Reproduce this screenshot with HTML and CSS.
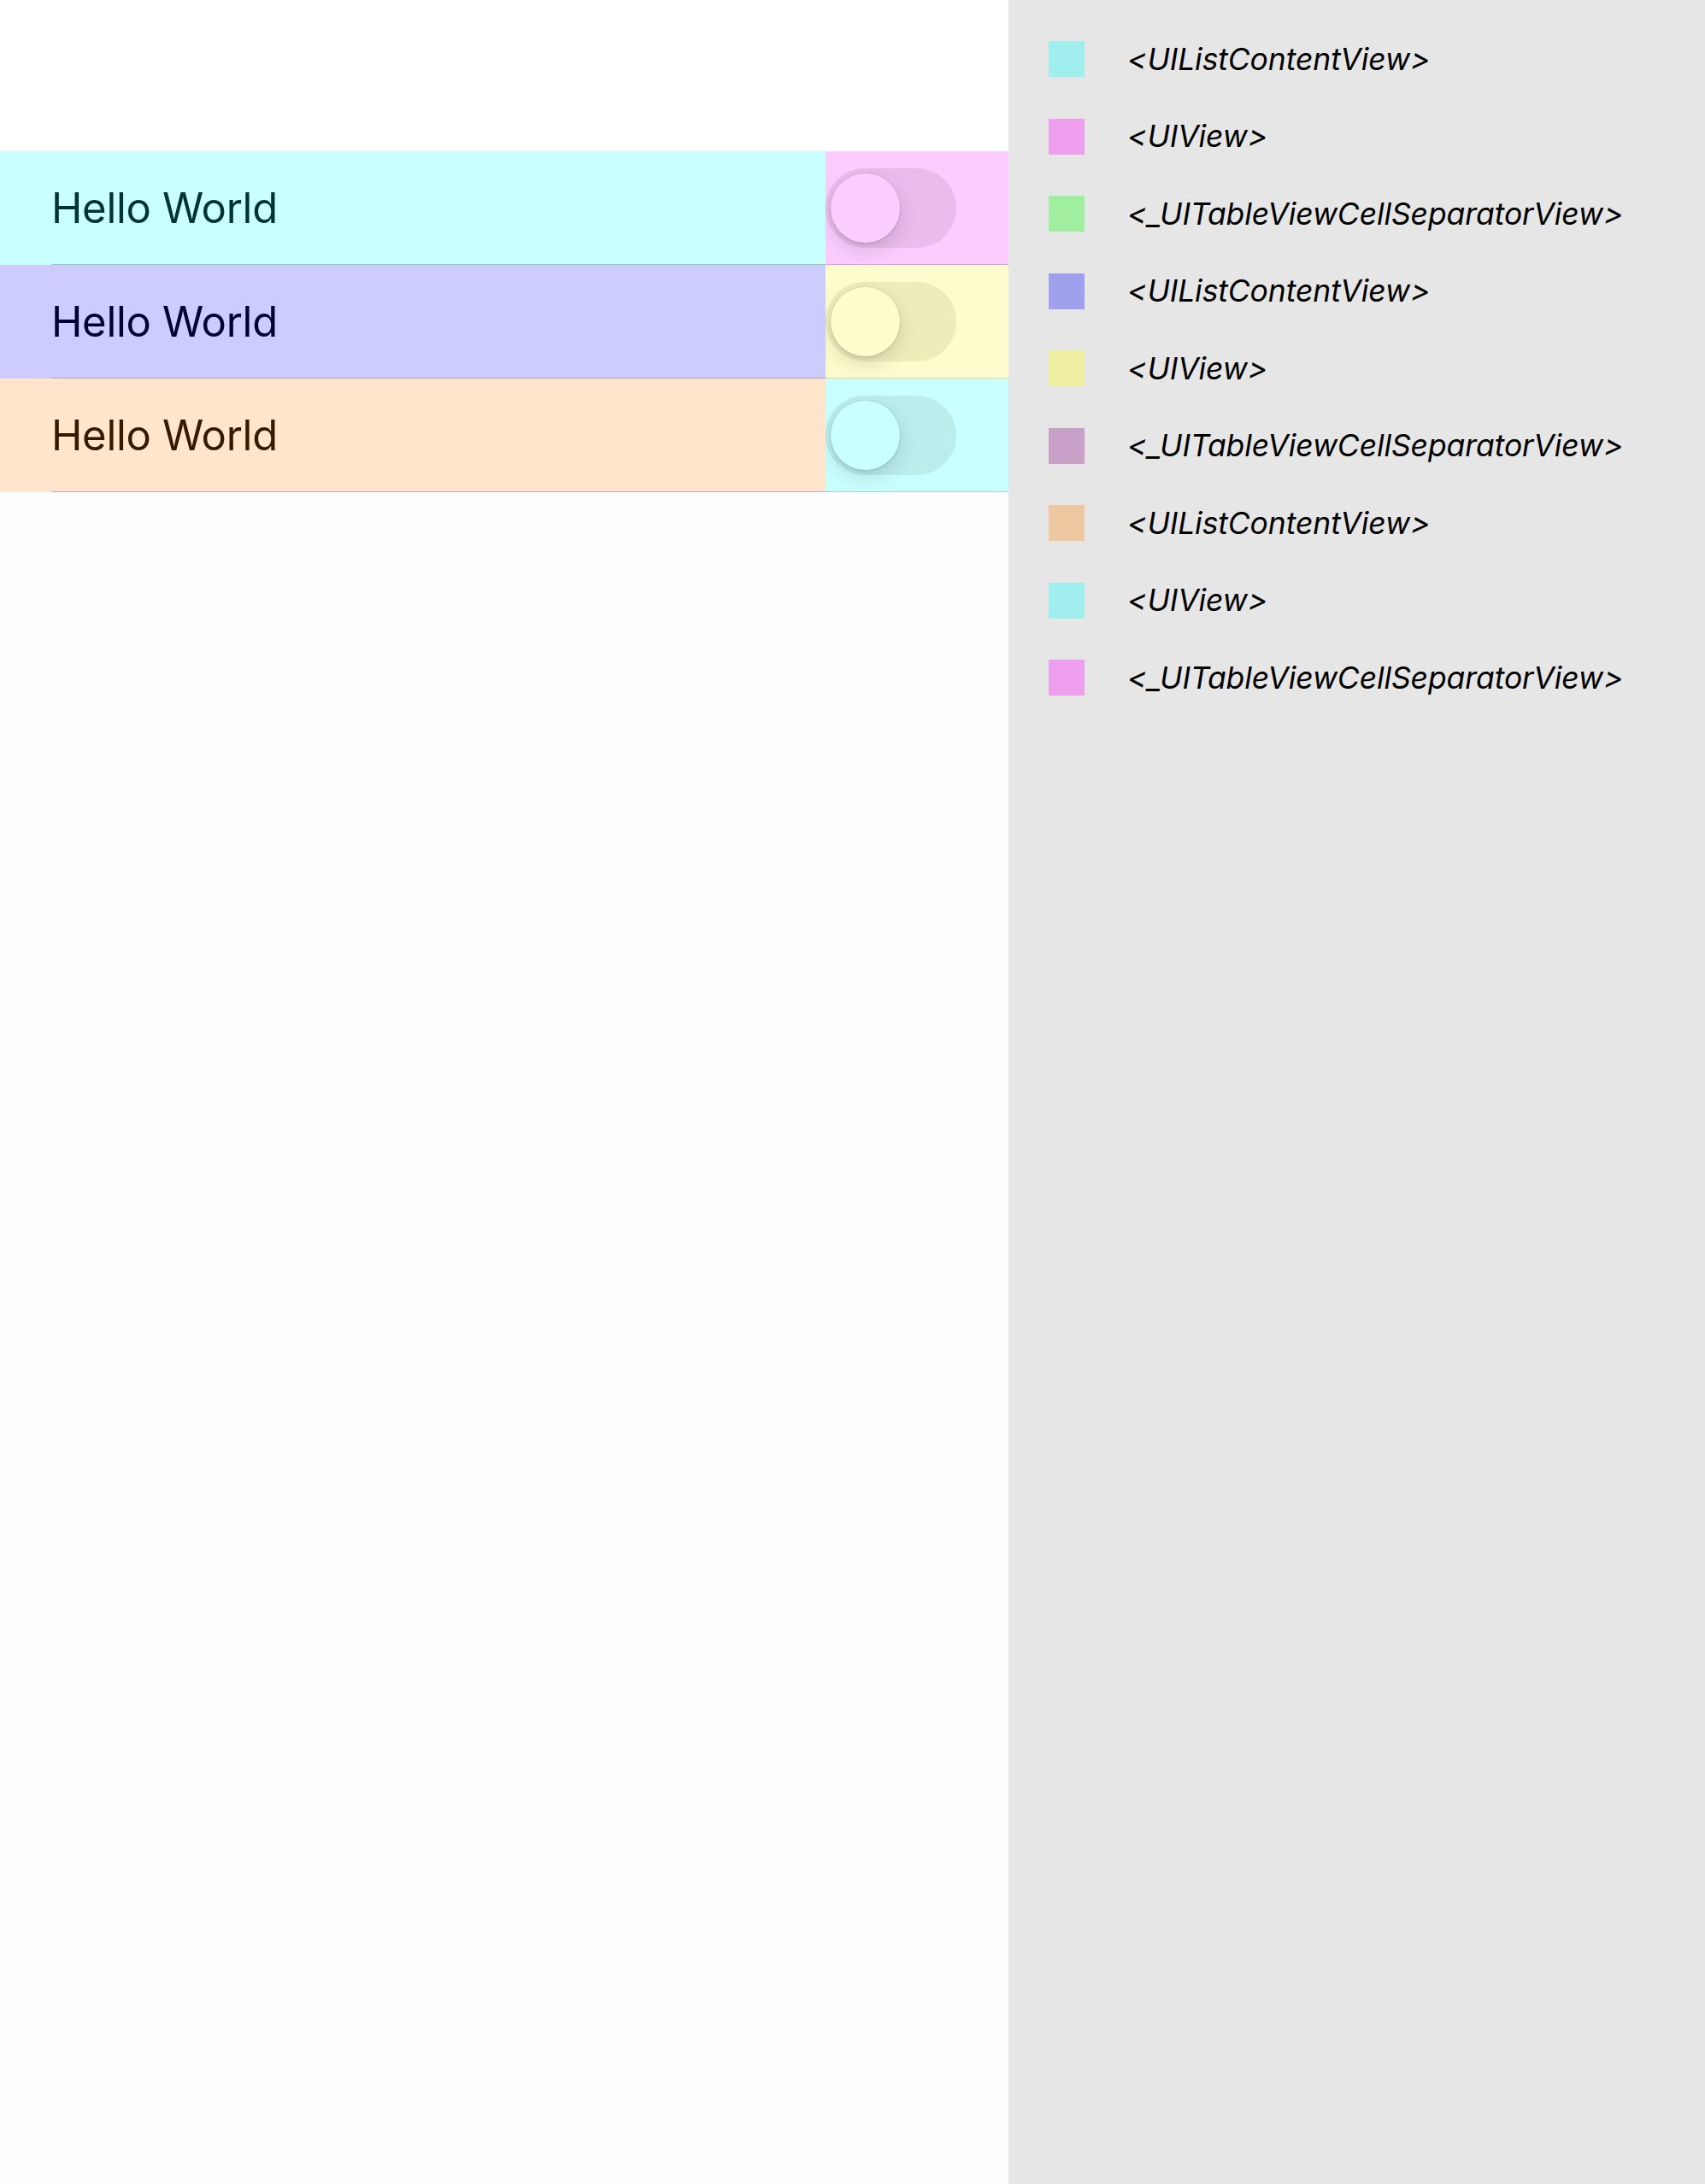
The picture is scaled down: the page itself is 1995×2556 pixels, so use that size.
FILE: index.html
```html
<!DOCTYPE html>
<html>
<head>
<meta charset="utf-8">
<link rel="stylesheet" href="styles.css">
</head>
<body>
<div class="canvas">
  <div class="nav"></div>
  <div class="list">
    <div class="row">
      <div class="content c1"><span class="label t1">Hello World</span></div>
      <div class="accessory a1"><div class="track k1"><div class="knob"></div></div></div>
    </div>
    <div class="row">
      <div class="content c2"><span class="label t2">Hello World</span></div>
      <div class="accessory a2"><div class="track k2"><div class="knob"></div></div></div>
    </div>
    <div class="row">
      <div class="content c3"><span class="label t3">Hello World</span></div>
      <div class="accessory a3"><div class="track k3"><div class="knob"></div></div></div>
    </div>
  </div>
</div>
<div class="legend">
  <div class="item"><span class="sw s-cyan"></span><span class="name">&lt;UIListContentView&gt;</span></div>
  <div class="item"><span class="sw s-pink"></span><span class="name">&lt;UIView&gt;</span></div>
  <div class="item"><span class="sw s-green"></span><span class="name">&lt;_UITableViewCellSeparatorView&gt;</span></div>
  <div class="item"><span class="sw s-blue"></span><span class="name">&lt;UIListContentView&gt;</span></div>
  <div class="item"><span class="sw s-yellow"></span><span class="name">&lt;UIView&gt;</span></div>
  <div class="item"><span class="sw s-mauve"></span><span class="name">&lt;_UITableViewCellSeparatorView&gt;</span></div>
  <div class="item"><span class="sw s-peach"></span><span class="name">&lt;UIListContentView&gt;</span></div>
  <div class="item"><span class="sw s-cyan"></span><span class="name">&lt;UIView&gt;</span></div>
  <div class="item"><span class="sw s-pink"></span><span class="name">&lt;_UITableViewCellSeparatorView&gt;</span></div>
</div>
</body>
</html>
```
FILE: styles.css
```css
html, body {
  margin: 0;
  padding: 0;
}
body {
  display: flex;
  width: 1995px;
  height: 2556px;
  overflow: hidden;
  font-family: Inter, "Noto Sans", sans-serif;
}
.canvas {
  flex: none;
  width: 1180px;
  height: 2556px;
  background: #fdfdfd;
}
.nav {
  height: 177px;
  background: #ffffff;
}
.list {
  display: flex;
  flex-direction: column;
}
.row {
  display: flex;
  height: 133px;
}
.content {
  position: relative;
  width: 966px;
  display: flex;
  align-items: center;
  padding-left: 60px;
  box-sizing: border-box;
}
.content::after {
  content: "";
  position: absolute;
  left: 60px;
  right: 0;
  bottom: 0;
  height: 1px;
}
.label {
  font-size: 49px;
  letter-spacing: -0.3px;
  margin-top: -1px;
}
.c1 { background: #caffff; }
.c1::after { background: #9ccaa8; }
.t1 { color: #003333; }
.c2 { background: #ccccff; }
.c2::after { background: #b4a2c8; }
.t2 { color: #000033; }
.c3 { background: #fee5cc; }
.c3::after { background: #c4a2d2; }
.t3 { color: #331a00; }

.accessory {
  width: 214px;
  box-sizing: border-box;
  padding-top: 20px;
  border-bottom: 1px solid transparent;
}
.a1 { background: #fccbff; border-bottom-color: #d6a0dc; }
.a2 { background: #fefccc; border-bottom-color: #dcd4a2; }
.a3 { background: #caffff; border-bottom-color: #a2d4d4; }

.track {
  width: 153px;
  height: 93px;
  border-radius: 46.5px;
  padding: 6px;
  box-sizing: border-box;
}
.knob {
  width: 81px;
  height: 81px;
  border-radius: 50%;
  box-shadow: 0 0 0 1.5px rgba(0,0,0,0.04), 0 9px 24px rgba(0,0,0,0.12), 0 3px 3px rgba(0,0,0,0.05);
}
.k1 { background: #ebbbeb; }
.k1 .knob { background: #fccbff; }
.k2 { background: #eeecbb; }
.k2 .knob { background: #fefccc; }
.k3 { background: #bbeded; }
.k3 .knob { background: #caffff; }

.legend {
  flex: 1;
  background: #e6e6e6;
  padding: 48px 0 0 47px;
  display: flex;
  flex-direction: column;
  gap: 48.5px;
}
.item {
  display: flex;
  align-items: center;
  height: 42px;
}
.sw {
  flex: none;
  width: 42px;
  height: 42px;
}
.name {
  margin-left: 50px;
  font-size: 35.5px;
  font-style: italic;
  color: #000;
  letter-spacing: -0.1px;
}
.s-cyan { background: #a0eeee; }
.s-pink { background: #eea0ee; }
.s-green { background: #a0eea0; }
.s-blue { background: #a0a0ee; }
.s-yellow { background: #eeeea0; }
.s-mauve { background: #c8a0c8; }
.s-peach { background: #eec8a0; }
```
